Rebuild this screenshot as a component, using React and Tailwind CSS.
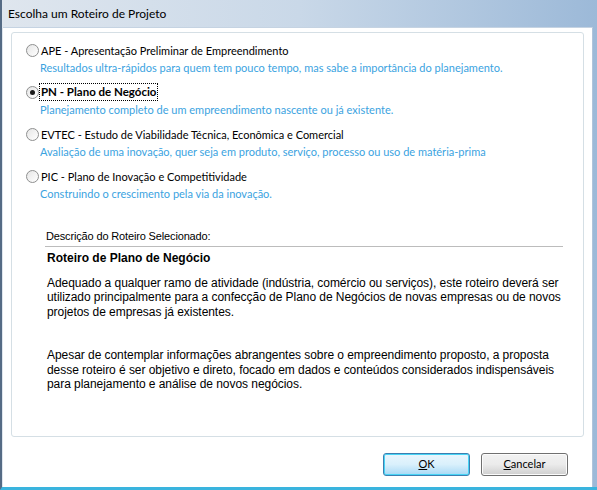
import { useState } from "react";

const roteiros = [
  {
    id: "APE",
    label: "APE - Apresentação Preliminar de Empreendimento",
    desc: "Resultados ultra-rápidos para quem tem pouco tempo, mas sabe a importância do planejamento.",
  },
  {
    id: "PN",
    label: "PN - Plano de Negócio",
    desc: "Planejamento completo de um empreendimento nascente ou já existente.",
  },
  {
    id: "EVTEC",
    label: "EVTEC - Estudo de Viabilidade Técnica, Econômica e Comercial",
    desc: "Avaliação de uma inovação, quer seja em produto, serviço, processo ou uso de matéria-prima",
  },
  {
    id: "PIC",
    label: "PIC - Plano de Inovação e Competitividade",
    desc: "Construindo o crescimento pela via da inovação.",
  },
];

const paragraphs = [
  [
    "Adequado a qualquer ramo de atividade (indústria, comércio ou serviços), este roteiro deverá ser",
    "utilizado principalmente para a confecção de Plano de Negócios de novas empresas ou de novos",
    "projetos de empresas já existentes.",
  ],
  [
    "Apesar de contemplar informações abrangentes sobre o empreendimento proposto, a proposta",
    "desse roteiro é ser objetivo e direto, focado em dados e conteúdos considerados indispensáveis",
    "para planejamento e análise de novos negócios.",
  ],
];

const Radio = ({ checked }) => (
  <span className="w-[13px] h-[13px] rounded-full border border-[#8e8f8f] bg-gradient-to-br from-[#e6e6e6] to-white flex items-center justify-center shrink-0">
    {checked && <span className="w-[5px] h-[5px] rounded-full bg-[#1a1a1a]" />}
  </span>
);

const App = () => {
  const [selected, setSelected] = useState("PN");

  return (
    <div className="w-[597px] h-[490px] flex flex-col bg-gradient-to-r from-[#dfe6ee] via-[#c9d8e8] to-[#9cb9d8] border-l-2 border-l-[#556b85] border-b-[3px] border-b-[#3ab4de] font-['Lato',sans-serif] text-[11px] text-black overflow-hidden">
      <div className="h-[27px] shrink-0 flex items-center pl-[6px] text-[12px]">
        Escolha um Roteiro de Projeto
      </div>
      <div className="flex-1 flex flex-col bg-white border-t border-[#c5d3e2] mr-[4px] border-r border-r-[#b0c4da] ml-px">
        <div className="mt-[4px] ml-[8px] w-[573px] h-[405px] border border-[#d5dfe5] rounded-[3px] pt-[7px]">
          {roteiros.map((r) => (
            <div key={r.id} className="pl-[14px] h-[42px]" onClick={() => setSelected(r.id)}>
              <div className="flex items-center h-[20px] gap-[1px]">
                <Radio checked={selected === r.id} />
                <span
                  className={
                    selected === r.id
                      ? "font-bold text-[11.5px] outline outline-1 outline-dotted outline-black px-px leading-[16px]"
                      : "leading-[15px] px-px"
                  }
                >
                  {r.label}
                </span>
              </div>
              <div className="pl-[14px] h-[18px] leading-[15px] text-[#3ba3df]">
                {r.desc}
              </div>
            </div>
          ))}
          <div className="ml-[33px] mr-[20px] mt-[21px] font-['Liberation_Sans',Arial,sans-serif] text-[11px]">
            <div className="leading-[14px] pl-px pb-[3px] border-b border-[#bcbcbc] tracking-[-0.15px]">
              Descrição do Roteiro Selecionado:
            </div>
            <div className="pl-[2px] pt-[4px] text-[12px]">
              <div className="font-bold leading-[15px]">Roteiro de Plano de Negócio</div>
              {paragraphs.map((lines, i) => (
                <div key={i} className={i === 0 ? "mt-[10px]" : "mt-[29px]"}>
                  {lines.map((line) => (
                    <div key={line} className="h-[14.4px] leading-[14.4px] whitespace-nowrap tracking-[-0.05px]">
                      {line}
                    </div>
                  ))}
                </div>
              ))}
            </div>
          </div>
        </div>
        <div className="flex justify-end gap-[11px] mt-[16px] pr-[24px]">
          <button className="w-[87px] h-[23px] rounded-[3px] border border-[#3c7fb1] bg-gradient-to-b from-[#eaf6fd] via-[#d9f0fc] to-[#a7d9f5] shadow-[inset_0_0_0_1px_#48d4f5] text-[11px]">
            <span className="underline">O</span>K
          </button>
          <button className="w-[87px] h-[23px] rounded-[3px] border border-[#707070] bg-gradient-to-b from-[#f2f2f2] via-[#ebebeb] to-[#cfcfcf] shadow-[inset_0_0_0_1px_#fcfcfc] text-[11px]">
            <span className="underline">C</span>ancelar
          </button>
        </div>
      </div>
    </div>
  );
};

export default App;
